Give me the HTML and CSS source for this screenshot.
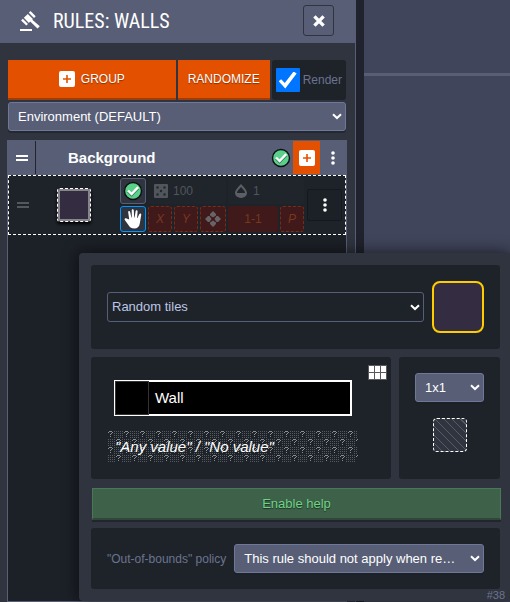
FILE: index.html
```html
<!DOCTYPE html>
<html lang="en">
<head>
<meta charset="utf-8">
<meta name="viewport" content="width=device-width, initial-scale=1">
<title>Rules: Walls</title>
<link rel="stylesheet" href="styles.css">
</head>
<body>
<svg class="defs" aria-hidden="true">
  <symbol id="chevron" viewBox="0 0 10 7"><path d="M1 1.2 L5 5 L9 1.2" fill="none" stroke="currentColor" stroke-width="2"/></symbol>
  <symbol id="plus" viewBox="0 0 16 16"><path fill-rule="evenodd" fill="#fff" d="M2 0h12a2 2 0 0 1 2 2v12a2 2 0 0 1-2 2H2a2 2 0 0 1-2-2V2a2 2 0 0 1 2-2zM7.200 4v3.200H4v1.600h3.200V12h1.600V8.800H12V7.200H8.800V4z"/></symbol>
  <symbol id="ok" viewBox="0 0 20 20"><circle cx="10" cy="10" r="8.5" fill="#5bd08b" stroke="#0c1013" stroke-width="1.4"/><path d="M5 10.5 L8.6 14 L15.2 7.2" fill="none" stroke="#2c6e50" stroke-width="2.4"/><path d="M5 9.5 L8.6 13 L15.2 6.2" fill="none" stroke="#fff" stroke-width="2.4"/></symbol>
  <symbol id="more" viewBox="0 0 4 14"><circle cx="2" cy="2" r="1.8"/><circle cx="2" cy="7" r="1.8"/><circle cx="2" cy="12" r="1.8"/></symbol>
</svg>
<div class="app">
  <section class="panel">
    <header class="panel-head">
      <svg class="gavel" viewBox="0 0 20 20" aria-hidden="true"><g fill="#fff"><path d="M0 18h12v2H0z"/><path d="M10.5 0 L15.7 5.2 L14 6.9 L8.8 1.7z"/><path d="M7.8 2.9 L12.9 8 L12.3 8.700 L19.8 15.2 L17.5 17.5 L10.2 10.6 L8.9 11.9 L3.8 6.8z"/><path d="M2.8 7.7 L8 12.9 L6.3 14.6 L1.1 9.4z"/></g></svg>
      <h1>RULES: WALLS</h1>
      <button class="close" type="button" aria-label="Close"><svg viewBox="0 0 12 12"><path d="M1.4 1.4 L10.6 10.6 M10.6 1.4 L1.4 10.6" stroke="#fff" stroke-width="3.4"/></svg></button>
    </header>
    <div class="panel-body">
      <div class="toolbar">
        <button class="action grow" type="button"><svg class="i16" aria-hidden="true"><use href="#plus"/></svg>GROUP</button>
        <button class="action" type="button">RANDOMIZE</button>
        <label class="render"><input class="tick" type="checkbox" checked>Render</label>
      </div>
      <div class="pick">
        <select aria-label="Layer"><option>Environment (DEFAULT)</option></select>
        <svg class="chev" aria-hidden="true"><use href="#chevron"/></svg>
      </div>
      <div class="group">
        <div class="group-head">
          <span class="handle"></span>
          <h2>Background</h2>
          <svg class="i20" aria-hidden="true"><use href="#ok"/></svg>
          <button class="add" type="button" aria-label="Add rule"><svg class="i16"><use href="#plus"/></svg></button>
          <button class="menu" type="button" aria-label="Group menu"><svg class="dots"><use href="#more"/></svg></button>
        </div>
        <div class="rule">
          <span class="grip"></span>
          <span class="preview"></span>
          <div class="cells">
            <button class="cell on" type="button" aria-label="Active"><svg class="i20"><use href="#ok"/></svg></button>
            <button class="cell info chance" type="button"><svg class="i14" viewBox="0 0 14 14" aria-hidden="true"><path fill="#51555c" d="M1 0h12v0a1 1 0 0 1 1 1v12a1 1 0 0 1-1 1H1a1 1 0 0 1-1-1V1a1 1 0 0 1 1-1z"/><g fill="#23272f"><circle cx="3.5" cy="3.5" r="1.2"/><circle cx="10.5" cy="3.5" r="1.2"/><circle cx="7" cy="7" r="1.2"/><circle cx="3.5" cy="10.5" r="1.2"/><circle cx="10.5" cy="10.5" r="1.2"/></g></svg>100</button>
            <button class="cell info alpha" type="button"><svg class="i14" viewBox="0 0 14 14" aria-hidden="true"><path fill="#5b5f66" fill-rule="evenodd" d="M7 0 C8.5 2 13 5.5 13 9 A6 5 0 0 1 1 9 C1 5.5 5.5 2 7 0zM7 3 C5.8 4.6 3 6.8 3 9h8C11 6.8 8.2 4.6 7 3z"/></svg>1</button>
            <button class="cell on picked" type="button" aria-label="Stop on match"><svg class="hand" viewBox="0 0 18 20"><path fill="#fff" d="M5.2 10.4 L4.2 3.2 C4 1.8 5.8 1.5 6.1 2.8 L7.4 8.4 L7.8 8.4 L7.7 1.3 C7.7 -.2 9.7 -.2 9.8 1.3 L10.2 8.4 L10.6 8.4 L11.6 2.2 C11.8 .8 13.7 1.1 13.6 2.5 L13.1 9 L13.5 9.1 L15.2 5.2 C15.8 4 17.5 4.5 17.2 5.9 L15.8 14.5 C15.3 17.8 13.3 19.5 10.3 19.5 C7.4 19.5 6 18.4 4.6 16.3 L.8 11.1 C0 9.8 1.4 8.8 2.6 9.5z"/></svg></button>
            <button class="cell off" type="button"><i>X</i></button>
            <button class="cell off" type="button"><i>Y</i></button>
            <button class="cell off" type="button" aria-label="Offset"><svg class="i16" viewBox="0 0 16 16"><path fill="#676368" d="M8 0l3 3v1.500L8 6.500 5 4.500V3zM8 16l3-3v-1.500L8 9.500l-3 2V13zM0 8l3-3h1.500L6.500 8l-2 3H3zM16 8l-3-3h-1.500L9.500 8l2 3H13z"/></svg></button>
            <button class="cell off plain span" type="button">1-1</button>
            <button class="cell off" type="button"><i>P</i></button>
          </div>
          <button class="rule-menu" type="button" aria-label="Rule menu"><svg class="dots"><use href="#more"/></svg></button>
        </div>
      </div>
    </div>
  </section>
  <main class="canvas"></main>

  <div class="dialog">
    <div class="box mode">
      <div class="pick dark">
        <select aria-label="Tile mode"><option>Random tiles</option></select>
        <svg class="chev" aria-hidden="true"><use href="#chevron"/></svg>
      </div>
      <button class="tile" type="button" aria-label="Pick tile"></button>
    </div>
    <div class="pair">
      <div class="box values">
        <svg class="grid-icon" viewBox="0 0 19 15" aria-hidden="true"><path fill="#55585c" d="M0 0h19v15H0z"/><path fill="#fff" d="M1 1h5v6H1zM7 1h5v6H7zM13 1h5v6h-5zM1 8h5v6H1zM7 8h5v6H7zM13 8h5v6h-5z"/></svg>
        <button class="wall" type="button"><span class="swatch"></span>Wall</button>
        <button class="any" type="button">
          <svg class="pattern" aria-hidden="true"><defs>
            <pattern id="specks" width="2" height="2" patternUnits="userSpaceOnUse"><path fill="#555a60" d="M1 0h1v1H1z"/></pattern>
            <pattern id="marks" width="16" height="16" patternUnits="userSpaceOnUse">
              <path fill="url(#specks)" d="M7 0h9v7H7zM0 8h8v7H0zM15 8h1v7h-1z"/>
              <path fill="#8b8e91" d="M2 0h3v1H2zM1 1h1v1H1zM5 1h1v1H5zM4 2h1v1H4zM3 3h1v1H3zM3 5h1v1H3z"/>
              <path fill="#8b8e91" d="M10 8h3v1h-3zM9 9h1v1H9zM13 9h1v1h-1zM12 10h1v1h-1zM11 11h1v1h-1zM11 13h1v1h-1z"/>
            </pattern></defs><rect width="100%" height="100%" fill="url(#marks)"/></svg>
          <span>"Any value" / "No value"</span>
        </button>
      </div>
      <div class="box size">
        <div class="pick">
          <select aria-label="Rule size"><option>1x1</option></select>
          <svg class="chev" aria-hidden="true"><use href="#chevron"/></svg>
        </div>
        <button class="pattern-cell" type="button" aria-label="Pattern"></button>
      </div>
    </div>
    <button class="help" type="button">Enable help</button>
    <div class="box policy">
      <label for="policy">"Out-of-bounds" policy</label>
      <div class="pick">
        <select id="policy"><option>This rule should not apply when reading cells outside of the layer</option></select>
        <svg class="chev" aria-hidden="true"><use href="#chevron"/></svg>
      </div>
    </div>
    <span class="uid">#38</span>
  </div>
</div>
</body>
</html>
```
FILE: styles.css
```css
*, *::before { box-sizing: border-box; }
body {
  margin: 0;
  font: 13px/16px "Liberation Sans", Arial, sans-serif;
  color: #fff;
  background: #40455b;
}
button, select, input { font: inherit; color: inherit; margin: 0; padding: 0; border: 0; }
button { display: flex; align-items: center; justify-content: center; background: none; }
svg { display: block; flex: none; }
h1, h2 { margin: 0; }
.defs { position: absolute; width: 0; height: 0; }
.i14 { width: 14px; height: 14px; }
.i16 { width: 16px; height: 16px; }
.i20 { width: 20px; height: 20px; }
.dots { width: 4px; height: 14px; fill: #fff; }

.app { position: relative; display: flex; min-height: 100vh; overflow: hidden; }
.panel {
  flex: 0 0 calc(70% - 1px);
  display: flex;
  flex-direction: column;
  background: #30343f;
  border-right: 1px solid #575e78;
}
.panel-head { display: flex; align-items: center; height: 43px; padding: 0 21px 2px 20px; background: #575e76; }
.gavel { width: 20px; height: 20px; margin-right: 13px; }
h1 { flex: 1; font: 400 20px/26px "Roboto Condensed", "Liberation Sans Narrow", Roboto, sans-serif; }
.close { width: 31px; height: 31px; border: 1px solid #30343f; border-radius: 3px; }
.close svg { width: 12px; height: 12px; }
.panel-body { flex: 1; display: flex; flex-direction: column; padding: 17px 8px 0 7px; }

.toolbar { display: flex; gap: 2px; height: 40px; margin: 0 1px 2px; }
.action {
  gap: 6px;
  padding: 0 10px;
  font-size: 12px;
  background: #e35000;
  border-bottom: 2px solid #9c3e0b;
  text-shadow: 0 1px 1px #0006;
}
.grow { flex: 1; }
.render { display: flex; align-items: center; gap: 3px; padding: 0 4px; border-radius: 3px; background: #1e2229; color: #6c7390; font-size: 12px; }
.tick { appearance: none; width: 24px; height: 24px; border-radius: 1px; background: #0075ff; display: grid; place-items: center; }
.tick::before { content: ""; width: 18px; height: 17px; background: #fff; clip-path: polygon(0 57%, 14% 45%, 34% 68%, 83% 0, 100% 12%, 37% 100%); }

.pick { display: grid; align-items: center; min-width: 0; }
.pick > * { grid-area: 1 / 1; }
.pick select {
  appearance: none;
  width: 100%;
  min-width: 0;
  height: 29px;
  padding: 0 22px 0 9px;
  background: #575e76;
  border: 1px solid #6f7898;
  border-radius: 3px;
  box-shadow: 0 2px 0 #1b1e2688;
  text-overflow: ellipsis;
}
.chev { width: 10px; height: 7px; margin-right: 4px; justify-self: end; pointer-events: none; }
.panel-body > .pick { margin: 0 1px 9px; }

.group { flex: 1; border: 1px solid #575e76; border-top: 0; background: #1c2027; }
.group-head { display: flex; align-items: center; height: 35px; background: #575e76; }
.handle { width: 28px; height: 33px; border-right: 1px solid #22252e; display: grid; place-items: center; }
.handle::before, .grip::before { content: ""; width: 12px; height: 6px; border: solid #fff; border-width: 2px 0; }
h2 { flex: 1; padding-left: 32px; font-size: 15px; line-height: 20px; }
.add { width: 27px; height: 33px; margin-left: 2px; background: #e35000; }
.menu { width: 26px; height: 33px; }

.rule { display: flex; align-items: center; height: 60px; padding: 0 3px 0 8px; border: 1px dashed #fff; background: #1e2229; }
.grip { width: 12px; }
.grip::before { display: block; border-color: #54575d; }
.preview { width: 34px; height: 34px; margin: 0 29px 0 28px; border: 1px dashed #fff; border-radius: 3px; background: #342d42; box-shadow: inset 0 0 0 2px #85858a, 0 2px 3px #000; }
.cells { flex: 1; display: grid; grid-template-columns: 26px 24px 24px 26px 24px 24px 24px; grid-auto-rows: 26px; gap: 2px; }
.cell { border-radius: 3px; font-size: 12px; }
.on { background: #30343f; border: 1px solid #575e78; }
.picked { border-color: #0095ff; }
.hand { width: 18px; height: 20px; }
.info { justify-content: flex-start; gap: 5px; padding-left: 6px; background: #20252c; color: #51555c; }
.chance, .alpha { grid-column: span 3; }
.off { background: #40191b; border: 1px dashed #732e1a; color: #79381c; }
.plain { border-style: none; }
.span { grid-column: span 2; }
.rule-menu { width: 35px; height: 32px; border: 1px solid #15181e; background: #1c2027; border-radius: 2px; }

.canvas {
  flex: 1;
  border-left: 8px solid #20222d;
  background: linear-gradient(#575e76, #575e76) 0 73px / 100% 3px no-repeat, #40455b;
}

.dialog {
  position: absolute;
  inset: 253px 0 1px 79px;
  display: flex;
  flex-direction: column;
  gap: 8px;
  padding: 12px 10px 12px 12px;
  background: #30343f;
  border-radius: 4px 0 0 4px;
  box-shadow: 0 0 16px #000a;
}
.box { background: #1e2329; border-radius: 3px; }
.mode { display: flex; align-items: center; gap: 8px; height: 84px; padding: 0 16px; }
.mode .pick { flex: 1; }
.dark select { height: 30px; padding-left: 4px; background: none; border-color: #575e78; color: #bcc7e6; box-shadow: none; }
.tile { width: 52px; height: 52px; border: 2px solid #ffcc00; border-radius: 8px; background: #342d42; }
.pair { display: flex; gap: 8px; height: 122px; }
.values { position: relative; flex: 1; padding: 23px 33px 16px 16px; }
.grid-icon { position: absolute; top: 8px; right: 4px; width: 19px; height: 15px; }
.wall { justify-content: flex-start; gap: 6px; width: calc(100% - 13px); height: 36px; margin: 0 6px 15px 7px; border: 2px solid #fff; background: #000; font-size: 15px; }
.swatch { width: 34px; height: 34px; margin-left: -1px; border: 1px solid #333; }
.any { position: relative; justify-content: flex-start; width: 100%; height: 32px; padding-left: 8px; font-size: 15px; font-style: italic; }
.any span { position: relative; }
.pattern { position: absolute; inset: 0; width: 100%; height: 100%; }
.size { display: flex; flex-direction: column; align-items: center; gap: 16px; width: 101px; padding: 16px; }
.size .pick { width: 100%; }
.pattern-cell {
  width: 34px;
  height: 34px;
  border: 1px dashed #fff;
  border-radius: 4px;
  background: repeating-linear-gradient(45deg, #30343f 0 5px, #575b69 5px 6px);
}
.help { height: 32px; margin: 1px -1px 0 1px; background: #3e6149; border: 1px solid #4b7657; border-bottom: 2px solid #2f4738; color: #6fd387; text-shadow: 0 1px 1px #0008; box-shadow: 0 2px 0 #22252e; }
.policy { display: flex; align-items: center; gap: 8px; height: 61px; padding: 0 16px; }
.policy label { color: #6c7390; font-size: 12px; white-space: nowrap; }
.policy .pick { flex: 1; }
.uid { position: absolute; right: 5px; bottom: 0; font-size: 11px; line-height: 12px; color: #6c7390; }
```
